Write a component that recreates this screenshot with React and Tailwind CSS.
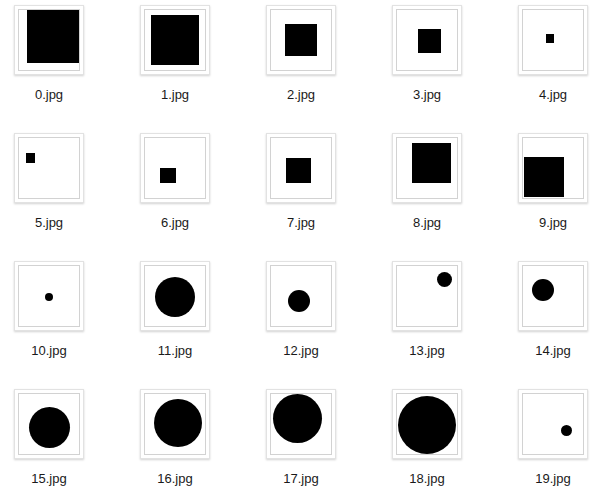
import React from "react";

const items = [
  { t: "s", l: 8, tp: 0, w: 52, h: 53 },
  { t: "s", l: 6, tp: 5, w: 48, h: 50 },
  { t: "s", l: 14, tp: 14, w: 32, h: 32 },
  { t: "s", l: 21, tp: 19, w: 23, h: 24 },
  { t: "s", l: 23, tp: 24, w: 8, h: 9 },
  { t: "s", l: 7, tp: 15, w: 9, h: 10 },
  { t: "s", l: 15, tp: 30, w: 16, h: 15 },
  { t: "s", l: 15, tp: 20, w: 25, h: 25 },
  { t: "s", l: 15, tp: 5, w: 39, h: 40 },
  { t: "s", l: 1, tp: 19, w: 40, h: 40 },
  { t: "c", l: 26, tp: 27, w: 8, h: 8 },
  { t: "c", l: 10, tp: 11, w: 40, h: 40 },
  { t: "c", l: 17, tp: 24, w: 22, h: 22 },
  { t: "c", l: 40, tp: 6, w: 15, h: 15 },
  { t: "c", l: 9, tp: 13, w: 22, h: 22 },
  { t: "c", l: 10, tp: 13, w: 41, h: 41 },
  { t: "c", l: 9, tp: 5, w: 48, h: 48 },
  { t: "c", l: 2, tp: 0, w: 49, h: 49 },
  { t: "c", l: 1, tp: 2, w: 58, h: 58 },
  { t: "c", l: 38, tp: 31, w: 11, h: 11 },
];

export default function App() {
  return (
    <div
      className="w-[600px] h-[501px] bg-white overflow-hidden pt-[5px]"
      style={{ fontFamily: '"Liberation Sans", Arial, sans-serif' }}
    >
      <div className="grid grid-cols-[repeat(5,98px)] gap-x-[28px] gap-y-[30px]">
        {items.map((it, i) => (
          <div key={i} className="flex flex-col items-center">
            <div className="w-[70px] h-[70px] bg-white border border-[#e2e2e2] shadow-[0_1px_2px_rgba(0,0,0,0.18)] p-[3px]">
              <div className="w-[62px] h-[62px] border border-[#d2d2d2] relative overflow-hidden">
                <div
                  className={`absolute bg-black ${it.t === "c" ? "rounded-full" : ""}`}
                  style={{ left: it.l, top: it.tp, width: it.w, height: it.h }}
                />
              </div>
            </div>
            <div className="mt-[12px] text-[13px] leading-[16px] text-[#1a1a1a]">
              {i}.jpg
            </div>
          </div>
        ))}
      </div>
    </div>
  );
}
